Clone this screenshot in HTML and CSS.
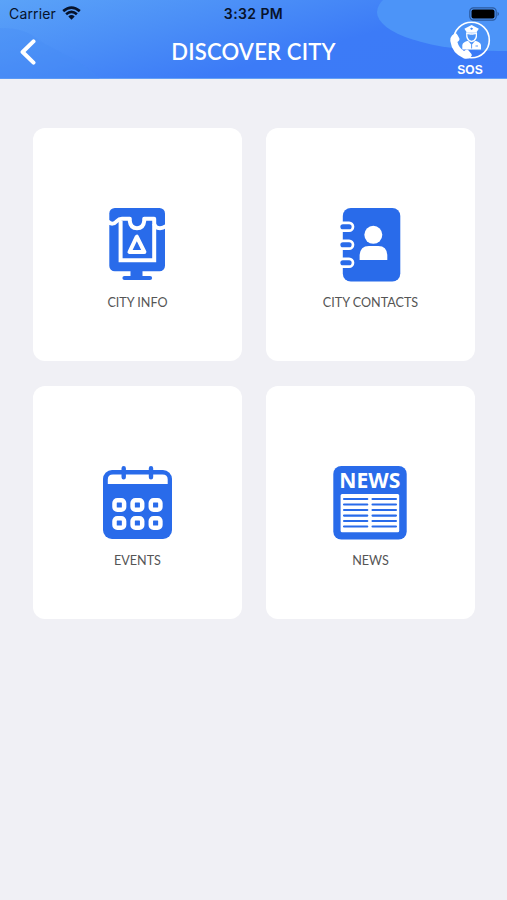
FILE: index.html
```html
<!DOCTYPE html>
<html lang="en">
<head>
<meta charset="utf-8">
<title>Discover City</title>
<link rel="stylesheet" href="styles.css">
</head>
<body>
<header class="header">
  <svg class="header-bg" viewBox="0 0 507 79" aria-hidden="true">
    <path d="M0 28C20 28 30 33 36 38C55 52 80 58 100 79H0Z" fill="#468cf5" opacity=".3"/>
    <ellipse cx="499" cy="12" rx="122" ry="39" fill="#4c94f8"/>
  </svg>
  <div class="status">
    <div class="carrier">
      <span>Carrier</span>
      <svg width="19" height="14" viewBox="0 0 19 14" fill="none" stroke="#07132b" stroke-width="2.7">
        <path d="M1.2 5.1Q9.5-1.9 17.8 5.1M4.1 8.2Q9.5 3.7 14.9 8.2"/>
        <path d="M6.3 10.4Q9.5 7.8 12.7 10.4L9.5 13.7Z" fill="#07132b" stroke="none"/>
      </svg>
    </div>
    <div class="clock">3:32 PM</div>
    <svg class="battery" width="31" height="14" viewBox="0 0 31 14">
      <rect x=".8" y=".8" width="26.4" height="12.4" rx="3.6" fill="none" stroke="#2b5a9f" stroke-width="1.2"/>
      <rect x="2.5" y="2.5" width="23" height="9" rx="2" fill="#000"/>
      <path d="M28.5 4.8Q31.5 7 28.5 9.2Z" fill="#2b5a9f"/>
    </svg>
  </div>
  <div class="bar">
    <svg class="back" width="16" height="26" viewBox="0 0 16 26" fill="none" stroke="#fff" stroke-width="4" stroke-linecap="round" stroke-linejoin="round"><path d="M13.5 2.4L2.6 13L13.5 23.6"/></svg>
    <h1>DISCOVER CITY</h1>
    <div class="sos">
      <svg width="42" height="40" viewBox="0 0 42 40">
        <circle cx="22.5" cy="19" r="17.8" fill="none" stroke="#fff" stroke-width="1.6"/>
        <path d="M3 14.5L5.7 12.5Q7.5 11.8 8.5 14L10.4 17.5Q10.9 19 9.4 20.2L8.4 21Q10 27 15 30L17 28.8Q18.4 28.2 19.6 29.5L22.5 33Q23.4 34.5 22 35.7Q19.5 38.5 15 37.4Q3 32.5 1.3 20Q1 16.5 3 14.5Z" fill="#fff"/>
        <path d="M15.4 7.8L22.6 4L29.8 7.8L27.7 11H17.5Z" fill="#fff"/>
        <path d="M21 7.7L22.6 6.4L24.2 7.7L22.6 9.1Z" fill="#468cf7"/>
        <path d="M17.8 12H27.4Q28.1 19.7 22.6 20.5Q17.1 19.7 17.8 12Z" fill="none" stroke="#fff" stroke-width="1.3"/>
        <path d="M17.6 12.5Q22.6 14.3 27.6 12.5" fill="none" stroke="#fff"/>
        <path d="M13.3 28.5V24Q14 21.1 19 19.8L22.6 24L26.2 19.8Q31.2 21.1 32 24V28.5Z" fill="#fff"/>
        <path d="M22.6 23.5V27.5M26.5 25H29" stroke="#468cf7" stroke-width=".9"/>
      </svg>
      <span>SOS</span>
    </div>
  </div>
</header>
<main class="grid">
  <a class="card">
    <svg width="74" height="74" viewBox="0 0 74 74">
      <rect x="9.3" width="55.7" height="63.3" rx="5.5" fill="#296bea"/>
      <g fill="none" stroke="#296bea" stroke-linecap="round"><path d="M36.5 62V68" stroke-width="12" stroke-linecap="butt"/><path d="M24.5 70H50" stroke-width="4.2"/></g>
      <g fill="none" stroke="#fff" stroke-width="4">
        <path d="M8 13.5Q12.5 18 17 13Q19 10.8 22 10.8H29.8V13Q30.5 20.2 37 20.2Q43.5 20.2 44.2 13V10.8H54.2V15.5Q55 20.2 60 20.2Q63 20.2 66 18" stroke-linejoin="round"/>
        <path d="M20.6 13V52.2H54.2V16"/>
        <path d="M36.8 28.7L29.5 44H44.4Z" stroke-linejoin="round"/>
      </g>
    </svg>
    <span>CITY INFO</span>
  </a>
  <a class="card">
    <svg width="74" height="74" viewBox="0 0 74 74">
      <rect x="9.8" width="57.5" height="73.5" rx="8" fill="#296bea"/>
      <g fill="#296bea" stroke="#fff" stroke-width="2.7">
        <rect x="6" y="14.8" width="14" height="7.8" rx="3.9"/>
        <rect x="6" y="32.8" width="14" height="7.8" rx="3.9"/>
        <rect x="6" y="50.8" width="14" height="7.8" rx="3.9"/>
      </g>
      <circle cx="40.3" cy="26.8" r="9" fill="#fff"/>
      <path d="M26.6 52V47Q27.3 38 35.8 38H45.3Q53.8 38 54.3 47V52Z" fill="#fff"/>
    </svg>
    <span>CITY CONTACTS</span>
  </a>
  <a class="card">
    <svg width="74" height="74" viewBox="0 0 74 74">
      <rect x="3" y="4" width="69" height="69" rx="9" fill="#296bea"/>
      <path d="M7.8 18V13.5Q7.8 8.5 13 8.5H62.5Q67.7 8.5 67.7 13.5V18Z" fill="#fff"/>
      <path d="M23.7 2.3V11.3M51 2.3V11.3" stroke="#296bea" stroke-width="4.4" stroke-linecap="round"/>
      <g fill="#296bea" stroke="#fff" stroke-width="4.5" stroke-linejoin="round">
        <rect x="14.5" y="34.2" width="9.6" height="9.6" rx="2.8"/><rect x="32.6" y="34.2" width="9.6" height="9.6" rx="2.8"/><rect x="50.8" y="34.2" width="9.6" height="9.6" rx="2.8"/>
        <rect x="14.5" y="52.2" width="9.6" height="9.6" rx="2.8"/><rect x="32.6" y="52.2" width="9.6" height="9.6" rx="2.8"/><rect x="50.8" y="52.2" width="9.6" height="9.6" rx="2.8"/>
      </g>
    </svg>
    <span>EVENTS</span>
  </a>
  <a class="card">
    <svg width="74" height="74" viewBox="0 0 74 74">
      <rect x=".3" width="73.4" height="73.6" rx="8" fill="#296bea"/>
      <text class="masthead" x="36.8" y="21.8" text-anchor="middle" textLength="61" lengthAdjust="spacingAndGlyphs">NEWS</text>
      <rect x="7.6" y="28" width="58.6" height="38.2" rx="1.5" fill="#fff"/>
      <path d="M11 33H34.3M39.5 33H63M11 38.5H34.3M39.5 38.5H63M11 44H34.3M39.5 44H63M11 49.6H34.3M39.5 49.6H63M11 55H34.3M39.5 55H63M11 60.5H34.3M39.5 60.5H63" stroke="#296bea" stroke-width="2.1" stroke-linecap="round"/>
    </svg>
    <span>NEWS</span>
  </a>
</main>
</body>
</html>
```
FILE: styles.css
```css
* { box-sizing: border-box; }
body {
  margin: 0;
  min-height: 900px;
  background: #f0f0f5;
  font-family: Lato, "Liberation Sans", sans-serif;
}
.header {
  position: relative;
  height: 79px;
  background: linear-gradient(165deg, #5ba3f8 0%, #4b8ff7 32%, #3c7bf7 62%, #3c7af7 100%);
  border-bottom: 1px solid #64a0f6;
}
.header-bg {
  position: absolute;
  inset: 0;
  width: 507px;
  height: 79px;
}
.status {
  position: relative;
  display: grid;
  grid-template-columns: 1fr auto 1fr;
  align-items: center;
  height: 27px;
  padding: 0 7px 0 9px;
  color: #07132b;
  font-family: Inter, sans-serif;
  font-size: 14px;
}
.carrier { display: flex; align-items: center; gap: 6px; letter-spacing: .15px; }
.carrier svg { margin-top: -1px; }
.clock { margin-left: -2px; font-weight: 600; letter-spacing: .4px; }
.battery { justify-self: end; }
.bar {
  position: relative;
  display: grid;
  grid-template-columns: 1fr auto 1fr;
  height: 51px;
  padding: 0 16px 0 20px;
}
.back { margin-top: 12px; }
h1 {
  margin: 0 0 0 -4px;
  padding-top: 11px;
  color: #fff;
  font-size: 22px;
  line-height: 28px;
  font-weight: 600;
  letter-spacing: .2px;
}
.sos {
  justify-self: end;
  display: flex;
  flex-direction: column;
  align-items: center;
  width: 42px;
  margin-top: -6px;
  color: #fff;
  font: 700 12px/14px "Liberation Sans", sans-serif;
}
.sos span { margin-top: 2px; }
.grid {
  display: grid;
  grid-template-columns: 209px 209px;
  grid-auto-rows: 233px;
  gap: 25px 24px;
  padding: 49px 33px;
}
.card {
  display: flex;
  flex-direction: column;
  align-items: center;
  padding-top: 80px;
  border-radius: 12px;
  background: #fff;
  color: #555;
  font-size: 12.6px;
  line-height: 16px;
}
.card svg { margin-left: -1px; }
.card span { margin-top: 13px; }
.masthead {
  fill: #fff;
  font: 700 20.5px "Open Sans", sans-serif;
}
```
